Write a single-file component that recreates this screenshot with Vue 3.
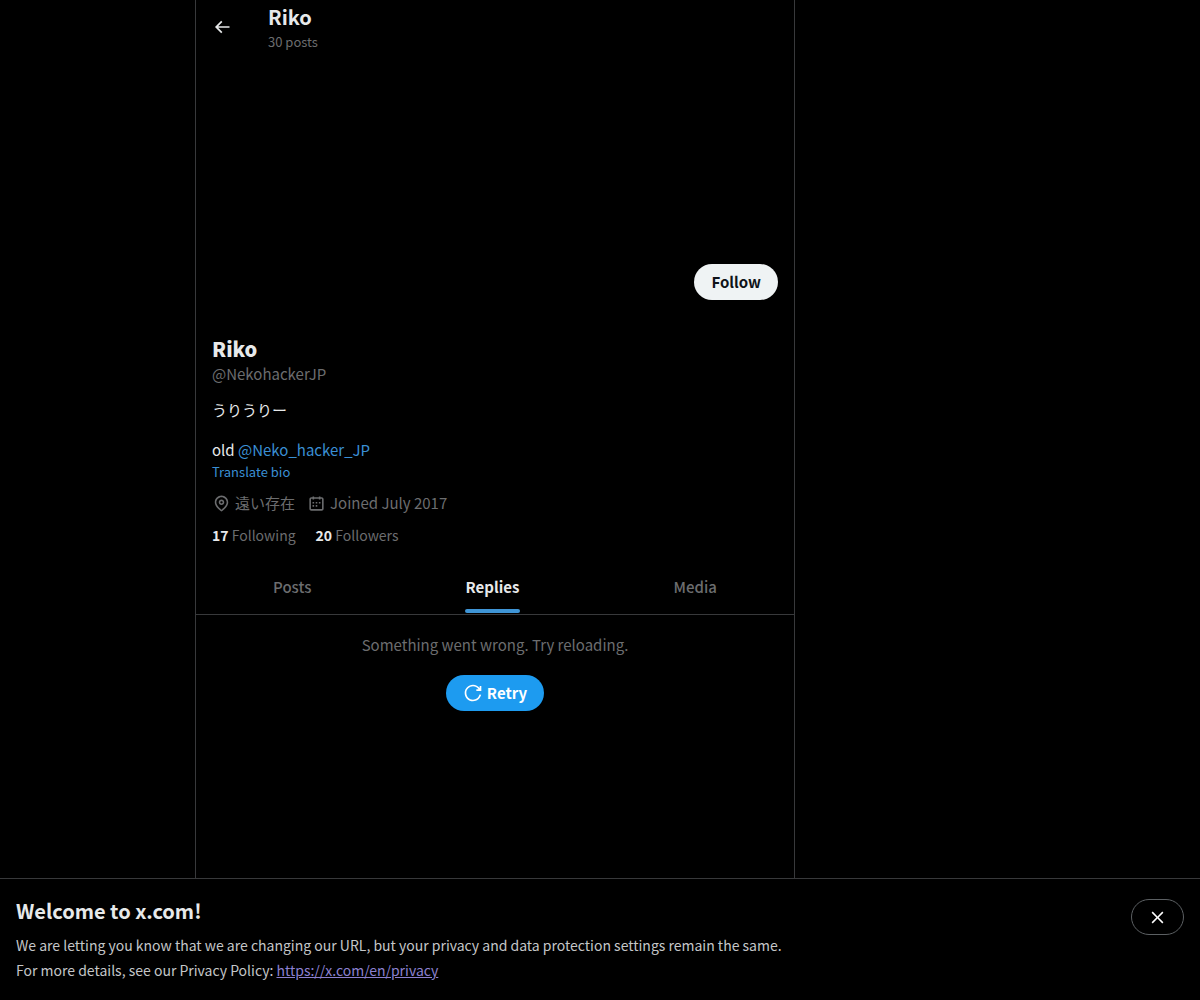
<script setup>
import {ref} from 'vue'

const user = {
  name: 'Riko',
  handle: '@NekohackerJP',
  posts: '30 posts',
  location: '遠い存在',
  joined: 'Joined July 2017',
  following: 17,
  followers: 20
}

const tabs = ['Posts', 'Replies', 'Media']
const activeTab = ref('Replies')
const showNotice = ref(true)
const following = ref(false)
</script>

<template>
  <div class="page">
    <div class="columns">
      <main class="profile">
        <header class="topbar">
          <button class="topbar_back" type="button" aria-label="Back">
            <svg viewBox="0 0 24 24" aria-hidden="true">
              <path d="M7.414 13l5.043 5.04-1.414 1.42L3.586 12l7.457-7.46 1.414 1.42L7.414 11H21v2H7.414z"/>
            </svg>
          </button>
          <div class="topbar_text">
            <h2 class="topbar_title">{{ user.name }}</h2>
            <div class="topbar_count">{{ user.posts }}</div>
          </div>
        </header>

        <div class="banner"></div>

        <section class="info">
          <div class="info_actions">
            <button class="follow" type="button" @click="following = !following">
              {{ following ? 'Following' : 'Follow' }}
            </button>
          </div>
          <h1 class="info_name">{{ user.name }}</h1>
          <div class="info_handle">{{ user.handle }}</div>
          <div class="bio">
            <p>うりうりー</p>
            <p>old <a href="#">@Neko_hacker_JP</a></p>
          </div>
          <button class="translate" type="button">Translate bio</button>
          <div class="meta">
            <span class="meta_item">
              <svg viewBox="0 0 24 24" aria-hidden="true">
                <path d="M12 7c-1.93 0-3.5 1.57-3.5 3.5S10.07 14 12 14s3.5-1.57 3.5-3.5S13.93 7 12 7zm0 5c-.827 0-1.5-.673-1.5-1.5S11.173 9 12 9s1.5.673 1.5 1.5S12.827 12 12 12zm0-10c-4.687 0-8.5 3.813-8.5 8.5 0 5.967 7.621 11.116 7.945 11.332l.555.37.555-.37c.324-.216 7.945-5.365 7.945-11.332C20.5 5.813 16.687 2 12 2zm0 17.77c-1.665-1.241-6.5-5.196-6.5-9.27C5.5 6.916 8.416 4 12 4s6.5 2.916 6.5 6.5c0 4.073-4.835 8.028-6.5 9.27z"/>
              </svg>
              {{ user.location }}
            </span>
            <span class="meta_item">
              <svg viewBox="0 0 24 24" aria-hidden="true">
                <path d="M7 4V3h2v1h6V3h2v1h1.5C19.89 4 21 5.12 21 6.5v12c0 1.38-1.11 2.5-2.5 2.5h-13C4.12 21 3 19.88 3 18.5v-12C3 5.12 4.12 4 5.5 4H7zm0 2H5.5c-.27 0-.5.22-.5.5v12c0 .28.23.5.5.5h13c.28 0 .5-.22.5-.5v-12c0-.28-.22-.5-.5-.5H17v1h-2V6H9v1H7V6zm0 6h2v-2H7v2zm0 4h2v-2H7v2zm4-4h2v-2h-2v2zm0 4h2v-2h-2v2zm4-4h2v-2h-2v2z"/>
              </svg>
              {{ user.joined }}
            </span>
          </div>
          <div class="stats">
            <a href="#"><b>{{ user.following }}</b> Following</a>
            <a href="#"><b>{{ user.followers }}</b> Followers</a>
          </div>
        </section>

        <nav class="tabs" role="tablist">
          <button
              v-for="tab in tabs"
              :key="tab"
              class="tab"
              :class="{ '_active': tab === activeTab }"
              type="button"
              role="tab"
              :aria-selected="tab === activeTab"
              @click="activeTab = tab"
          >
            <span class="tab_label">{{ tab }}</span>
          </button>
        </nav>

        <div class="error">
          <p>Something went wrong. Try reloading.</p>
          <button class="retry" type="button">
            <svg viewBox="0 0 24 24" aria-hidden="true">
              <path d="M12 4c-4.418 0-8 3.58-8 8s3.582 8 8 8c3.806 0 6.993-2.66 7.802-6.22l1.95.44C20.742 18.67 16.76 22 12 22 6.477 22 2 17.52 2 12S6.477 2 12 2c3.272 0 6.176 1.57 8 4V3.5h2v6h-6v-2h2.616C17.175 5.39 14.749 4 12 4z"/>
            </svg>
            Retry
          </button>
        </div>
      </main>
    </div>

    <footer v-if="showNotice" class="notice">
      <div>
        <h2 class="notice_title">Welcome to x.com!</h2>
        <p>We are letting you know that we are changing our URL, but your privacy and data protection settings remain the same.</p>
        <p>For more details, see our Privacy Policy: <a href="https://x.com/en/privacy">https://x.com/en/privacy</a></p>
      </div>
      <button class="notice_close" type="button" aria-label="Close" @click="showNotice = false">
        <svg viewBox="0 0 24 24" aria-hidden="true">
          <path d="M10.59 12L4.54 5.96l1.42-1.42L12 10.59l6.04-6.05 1.42 1.42L13.41 12l6.05 6.04-1.42 1.42L12 13.41l-6.04 6.05-1.42-1.42L10.59 12z"/>
        </svg>
      </button>
    </footer>
  </div>
</template>

<style>
body {
  margin: 0;
  background-color: #000;
}
</style>

<style scoped>
.page {
  min-height: 100vh;
  display: flex;
  flex-direction: column;
  background-color: #000;
  color: #e7e9ea;
  font-family: "Noto Sans CJK JP", sans-serif;
  font-size: 15px;
  line-height: 20px;
}

h1, h2, p {
  margin: 0;
}

a {
  color: #3a8fd4;
  text-decoration: none;
}

button {
  padding: 0;
  border: 0;
  background: none;
  color: inherit;
  font: inherit;
  cursor: pointer;
}

svg {
  width: 20px;
  height: 20px;
  fill: currentColor;
  flex-shrink: 0;
}

.columns {
  flex: 1;
  display: grid;
  grid-template-columns: 13fr minmax(auto, 600px) 27fr;
}

.profile {
  grid-column: 2;
  border: solid #38393b;
  border-width: 0 1px;
}

.topbar {
  height: 53px;
  padding: 0 16px;
  display: flex;
  align-items: center;
}

.topbar_back {
  width: 56px;
  height: 36px;
  display: flex;
  align-items: center;
}

.topbar_text {
  padding-bottom: 4px;
}

.topbar_title {
  font-size: 20px;
  line-height: 34px;
}

.topbar_count {
  color: #6c6d6f;
  font-size: 13px;
  line-height: 16px;
}

.banner {
  height: 199px;
}

.info {
  padding: 12px 16px 16px;
}

.info_actions {
  height: 73px;
  display: flex;
  justify-content: flex-end;
  align-items: flex-start;
}

.follow {
  height: 36px;
  padding: 0 17px;
  border-radius: 18px;
  background-color: #eff3f4;
  color: #0f1419;
  font-weight: 700;
}

.info_name {
  font-size: 20px;
  font-weight: 900;
  line-height: 24px;
}

.info_handle {
  margin-top: 3px;
  color: #6c6d6f;
}

.bio {
  margin-top: 16px;
  display: flex;
  flex-direction: column;
  gap: 20px;
}

.translate {
  display: block;
  margin-top: 4px;
  color: #3a8fd4;
  font-size: 13px;
  line-height: 16px;
}

.meta {
  margin-top: 13px;
  display: flex;
  gap: 12px;
  color: #6c6d6f;
}

.meta_item {
  display: flex;
  align-items: center;
  gap: 4px;
}

.meta_item svg {
  width: 19px;
  height: 19px;
}

.stats {
  margin-top: 12px;
  display: flex;
  gap: 20px;
  font-size: 14px;
}

.stats a {
  color: #6c6d6f;
}

.stats b {
  color: #e7e9ea;
}

.tabs {
  display: flex;
  border-bottom: 1px solid #38393b;
}

.tab {
  flex: 1 1 auto;
  height: 53px;
  display: flex;
  justify-content: center;
  color: #6c6d6f;
  font-weight: 500;
}

.tab_label {
  height: 100%;
  box-sizing: border-box;
  padding-top: 16px;
}

.tab._active {
  color: #e7e9ea;
  font-weight: 700;
}

.tab._active .tab_label {
  position: relative;
}

.tab._active .tab_label::after {
  content: "";
  position: absolute;
  left: -1px;
  right: -1px;
  bottom: 1px;
  height: 4px;
  border-radius: 2px;
  background-color: #3f95d6;
}

.error {
  padding: 20px;
  display: flex;
  flex-direction: column;
  align-items: center;
  gap: 20px;
  color: #6c6d6f;
}

.retry {
  height: 36px;
  padding: 0 17px;
  display: flex;
  align-items: center;
  gap: 4px;
  border-radius: 18px;
  background-color: #1d9bf0;
  color: #fff;
  font-weight: 700;
}

.notice {
  position: sticky;
  bottom: 0;
  padding: 20px 16px 17px;
  display: flex;
  justify-content: space-between;
  align-items: flex-start;
  gap: 16px;
  border-top: 1px solid #38393b;
  background-color: #000;
  color: #c4c6c8;
  font-size: 14px;
  line-height: 25px;
}

.notice_title {
  margin-bottom: 11px;
  color: #e7e9ea;
  font-size: 20px;
  line-height: 23px;
}

.notice a {
  color: #8c80d0;
  text-decoration: underline;
}

.notice_close {
  width: 53px;
  height: 36px;
  display: flex;
  flex-shrink: 0;
  justify-content: center;
  align-items: center;
  border: 1px solid #5c6063;
  border-radius: 18px;
  color: #fff;
}

.notice_close svg {
  width: 19px;
  height: 19px;
}
</style>
